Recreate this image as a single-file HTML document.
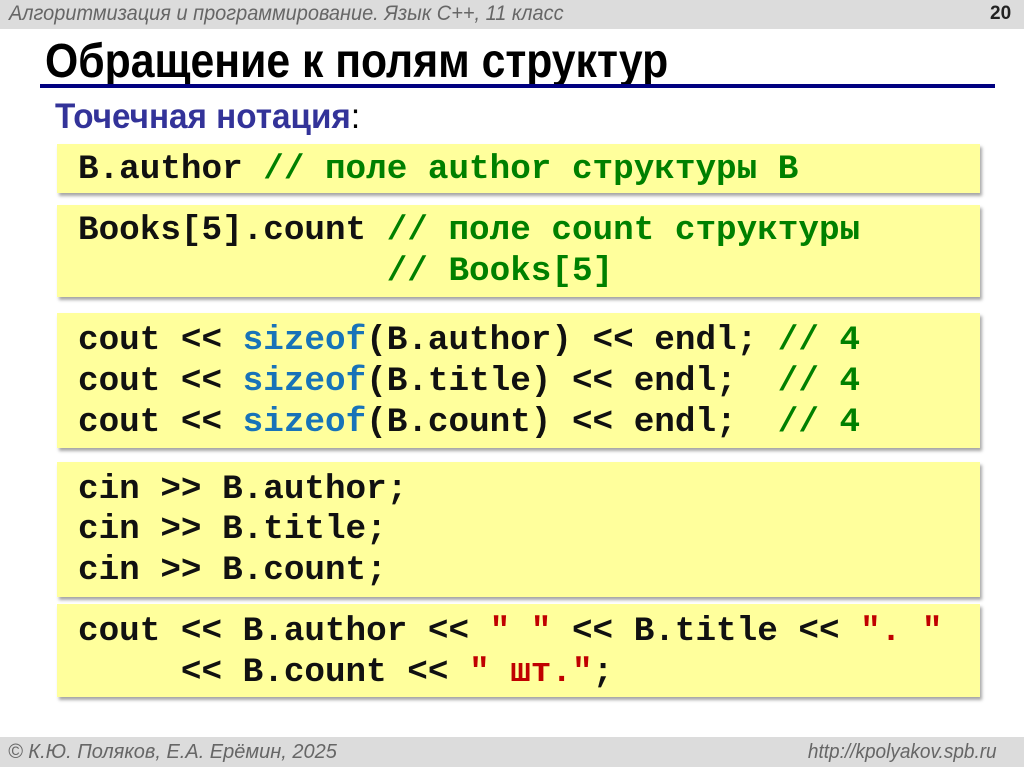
<!DOCTYPE html>
<html><head><meta charset="utf-8"><style>
*{margin:0;padding:0}
body{width:1024px;height:767px;position:relative;background:#fff;overflow:hidden;font-family:"Liberation Sans",sans-serif}
.hdr{position:absolute;left:0;top:0;width:1024px;height:29px;background:#dcdcdc}
.ftr{position:absolute;left:0;top:737px;width:1024px;height:30px;background:#dcdcdc}
.it{position:absolute;font-style:italic;color:#666;font-size:19px;transform-origin:left center;white-space:nowrap}
.box{position:absolute;left:57px;width:923px;background:#ffff9c;box-shadow:2px 3px 3px rgba(0,0,0,0.35)}
.ln{position:absolute;left:78px;font-family:"Liberation Mono",monospace;font-weight:bold;font-size:34.3px;line-height:41px;height:41px;white-space:pre;color:#111}
.c{color:#008000}.k{color:#1873b8}.s{color:#c00000}
</style></head><body>
<div class="hdr"></div>
<div class="it" style="left:9px;top:2px;font-size:21px;transform:scaleX(0.95)">Алгоритмизация и программирование. Язык С++, 11 класс</div>
<div style="position:absolute;left:990px;top:3px;font-weight:bold;font-size:19px;color:#222">20</div>
<div style="position:absolute;left:45px;top:34px;font-size:48px;font-weight:bold;color:#000;white-space:nowrap;transform-origin:left top;transform:scaleX(0.89)">Обращение к полям структур</div>
<div style="position:absolute;left:40px;top:84px;width:955px;height:4px;background:#000080"></div>
<div style="position:absolute;left:55px;top:97px;font-size:35px;font-weight:bold;color:#333399;white-space:nowrap;transform-origin:left top;transform:scaleX(0.95)">Точечная нотация<span style="font-weight:normal;color:#000">:</span></div>

<div class="box" style="top:144px;height:49px"></div>
<div class="ln" style="top:149px">B.author <span class="c">// поле author структуры B</span></div>

<div class="box" style="top:205px;height:92px"></div>
<div class="ln" style="top:210px">Books[5].count <span class="c">// поле count структуры</span></div>
<div class="ln" style="top:251px"><span class="c">               // Books[5]</span></div>

<div class="box" style="top:313px;height:135px"></div>
<div class="ln" style="top:320px">cout &lt;&lt; <span class="k">sizeof</span>(B.author) &lt;&lt; endl; <span class="c">// 4</span></div>
<div class="ln" style="top:361px">cout &lt;&lt; <span class="k">sizeof</span>(B.title) &lt;&lt; endl;  <span class="c">// 4</span></div>
<div class="ln" style="top:402px">cout &lt;&lt; <span class="k">sizeof</span>(B.count) &lt;&lt; endl;  <span class="c">// 4</span></div>

<div class="box" style="top:462px;height:135px"></div>
<div class="ln" style="top:469px">cin &gt;&gt; B.author;</div>
<div class="ln" style="top:509px">cin &gt;&gt; B.title;</div>
<div class="ln" style="top:550px">cin &gt;&gt; B.count;</div>

<div class="box" style="top:604px;height:93px"></div>
<div class="ln" style="top:611px">cout &lt;&lt; B.author &lt;&lt; <span class="s">" "</span> &lt;&lt; B.title &lt;&lt; <span class="s">". "</span></div>
<div class="ln" style="top:652px">     &lt;&lt; B.count &lt;&lt; <span class="s">" шт."</span>;</div>

<div class="ftr"></div>
<div class="it" style="left:8px;top:741px;font-size:20px">© К.Ю. Поляков, Е.А. Ерёмин, 2025</div>
<div class="it" style="right:27px;top:741px;font-size:20px;transform-origin:right center;transform:scaleX(0.95)">http://kpolyakov.spb.ru</div>
</body></html>
